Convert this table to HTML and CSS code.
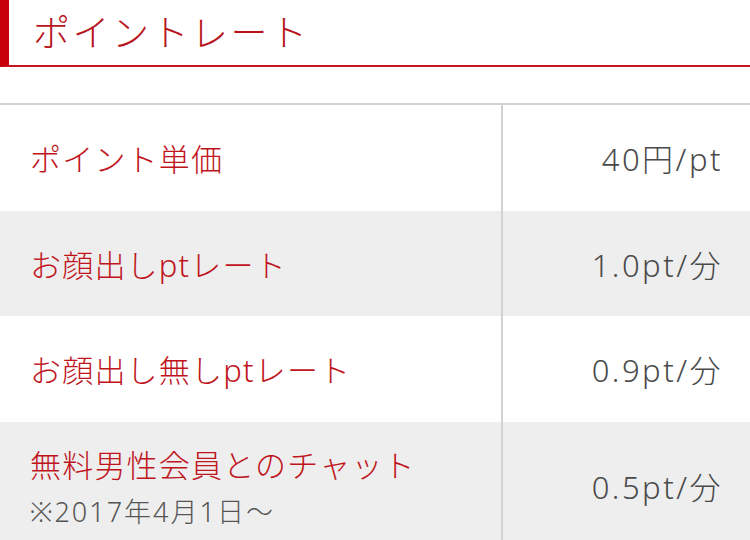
FILE: index.html
```html
<!DOCTYPE html>
<html lang="ja">
<head>
<meta charset="utf-8">
<link rel="stylesheet" href="styles.css">
</head>
<body>
<div class="page">
  <h2 class="title">ポイントレート</h2>
  <div class="rates">
    <div class="row">
      <div class="label">ポイント単価</div>
      <div class="value">40円/pt</div>
    </div>
    <div class="row alt">
      <div class="label">お顔出しptレート</div>
      <div class="value">1.0pt/分</div>
    </div>
    <div class="row">
      <div class="label">お顔出し無しptレート</div>
      <div class="value">0.9pt/分</div>
    </div>
    <div class="row alt tall">
      <div class="label">無料男性会員とのチャット<span class="note">※2017年4月1日〜</span></div>
      <div class="value">0.5pt/分</div>
    </div>
  </div>
</div>
</body>
</html>
```

FILE: styles.css
```css
html, body {
  margin: 0;
  padding: 0;
  background: #fff;
}
body {
  font-family: "Noto Sans", "Noto Sans CJK JP", sans-serif;
  font-weight: 300;
  overflow: hidden;
}
.page {
  width: 750px;
}
.title {
  margin: 0;
  height: 65px;
  box-sizing: content-box;
  border-left: 9px solid #c8000a;
  border-bottom: 2px solid #c8141e;
  padding-left: 24px;
  font-size: 37px;
  font-weight: 300;
  color: #b8141c;
  line-height: 65px;
  letter-spacing: 2.5px;
}
.rates {
  margin-top: 36px;
  border-top: 2px solid #d2d2d2;
}
.row {
  display: grid;
  grid-template-columns: 501px 1fr;
  min-height: 105.5px;
}
.row.alt {
  background: #eeeeee;
}
.row.tall {
  min-height: 128px;
}
.label {
  display: flex;
  flex-direction: column;
  justify-content: center;
  padding: 0 30px;
  color: #c0141c;
  font-size: 31px;
  letter-spacing: 1.2px;
}
.note {
  color: #555;
  font-size: 27px;
  margin-top: 5px;
  letter-spacing: 2px;
}
.value {
  border-left: 2px solid #d2d2d2;
  display: flex;
  align-items: center;
  justify-content: flex-end;
  padding-right: 27px;
  color: #4a4a4a;
  font-size: 31px;
  letter-spacing: 2.5px;
}
```
